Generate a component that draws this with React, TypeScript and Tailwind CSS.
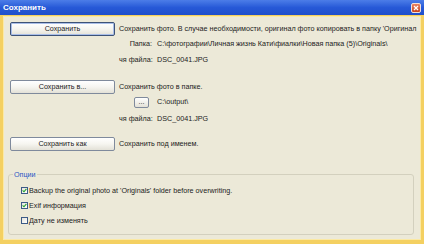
const font = { fontFamily: '"Liberation Sans", Arial, sans-serif' };

function XpButton({ label, isDefault }: { label: string; isDefault?: boolean }) {
  return (
    <div
      className={`w-[105px] h-[14px] flex items-center justify-center rounded-[2px] border bg-gradient-to-b from-white via-[#F6F5F0] to-[#E3E1D7] text-[7.2px] text-[#222] ${
        isDefault ? 'border-[#3D5277] shadow-[inset_0_0_0_1px_#A9BEE8]' : 'border-[#7F8A9C]'
      }`}
    >
      {label}
    </div>
  );
}

function Check({ checked, label }: { checked: boolean; label: string }) {
  return (
    <div className="h-[15px] flex items-center gap-[1px] pl-[12px]">
      <div className="w-[7px] h-[7px] border border-[#3C5A86] bg-gradient-to-br from-[#E4E3DC] to-white flex items-center justify-center">
        {checked && (
          <svg width="5" height="5" viewBox="0 0 5 5">
            <path d="M0.6 2.4 L2 3.8 L4.4 0.9" stroke="#22A32A" strokeWidth="1.1" fill="none" />
          </svg>
        )}
      </div>
      <span className="text-[7.2px] text-[#222] leading-none">{label}</span>
    </div>
  );
}

export default function App() {
  return (
    <div className="w-[424px] h-[244px] bg-[#F4D061] flex flex-col overflow-hidden" style={font}>
      <div className="h-[15px] flex items-center justify-between pl-[3px] pr-[3px] bg-gradient-to-b from-[#4C7DE8] via-[#2759D7] to-[#1F4FCB]">
        <span className="text-white font-bold text-[8px] leading-none">Сохранить</span>
        <div className="w-[10px] h-[10px] rounded-[2px] border border-[#F4E0D6] bg-gradient-to-b from-[#E9825F] to-[#C9431E] flex items-center justify-center">
          <svg width="6" height="6" viewBox="0 0 6 6">
            <path d="M1 1 L5 5 M5 1 L1 5" stroke="white" strokeWidth="1.3" />
          </svg>
        </div>
      </div>
      <div className="flex-1 mt-[2px] ml-[4px] mr-[4px] mb-[5px] bg-[#ECE9D8] flex flex-col text-[7.2px] text-[#222] shadow-[0_0_0_1px_#FBE9A4]">
        {/* section 1 */}
        <div className="mt-[5px] flex pl-[6px] gap-[4px]">
          <XpButton label="Сохранить" isDefault />
          <div className="flex flex-col whitespace-nowrap">
            <div className="h-[14px] flex items-center">
              Сохранить фото. В случае необходимости, оригинал фото копировать в папку 'Оригинал
            </div>
            <div className="h-[16px] flex items-center">
              <span className="w-[33px] text-right">Папка:</span>
              <span className="ml-[5px]">C:\фотографии\Личная жизнь Кати\фиалки\Новая папка (5)\Originals\</span>
            </div>
            <div className="h-[16px] flex items-center">
              <span className="w-[33px] text-right">чя файла:</span>
              <span className="ml-[5px]">DSC_0041.JPG</span>
            </div>
          </div>
        </div>

        {/* section 2 */}
        <div className="mt-[12px] flex pl-[6px] gap-[4px]">
          <XpButton label="Сохранить в..." />
          <div className="flex flex-col whitespace-nowrap">
            <div className="h-[14px] flex items-center">Сохранить фото в папке.</div>
            <div className="h-[17px] flex items-center">
              <div className="w-[33px] flex justify-end pr-[3px]">
                <div className="w-[15px] h-[11px] rounded-[2px] border border-[#7F8A9C] bg-gradient-to-b from-white to-[#E3E1D7] flex items-center justify-center leading-none pb-[2px]">
                  ...
                </div>
              </div>
              <span className="ml-[5px]">C:\output\</span>
            </div>
            <div className="h-[16px] flex items-center">
              <span className="w-[33px] text-right">чя файла:</span>
              <span className="ml-[5px]">DSC_0041.JPG</span>
            </div>
          </div>
        </div>

        {/* section 3 */}
        <div className="mt-[10px] flex pl-[6px] gap-[4px]">
          <XpButton label="Сохранить как" />
          <div className="h-[14px] flex items-center whitespace-nowrap">Сохранить под именем.</div>
        </div>

        {/* options */}
        <div className="mt-[23px] ml-[4px] w-[406px] h-[61px] relative border border-[#D3D0BE] rounded-[3px] pt-[8px]">
          <span className="absolute left-[4px] top-[-5px] px-[1px] bg-[#ECE9D8] text-[#2A56C4] leading-[9px]">Опции</span>
          <Check checked label="Backup the original photo at 'Originals' folder before overwriting." />
          <Check checked label="Exif информация" />
          <Check checked={false} label="Дату не изменять" />
        </div>
      </div>
    </div>
  );
}
